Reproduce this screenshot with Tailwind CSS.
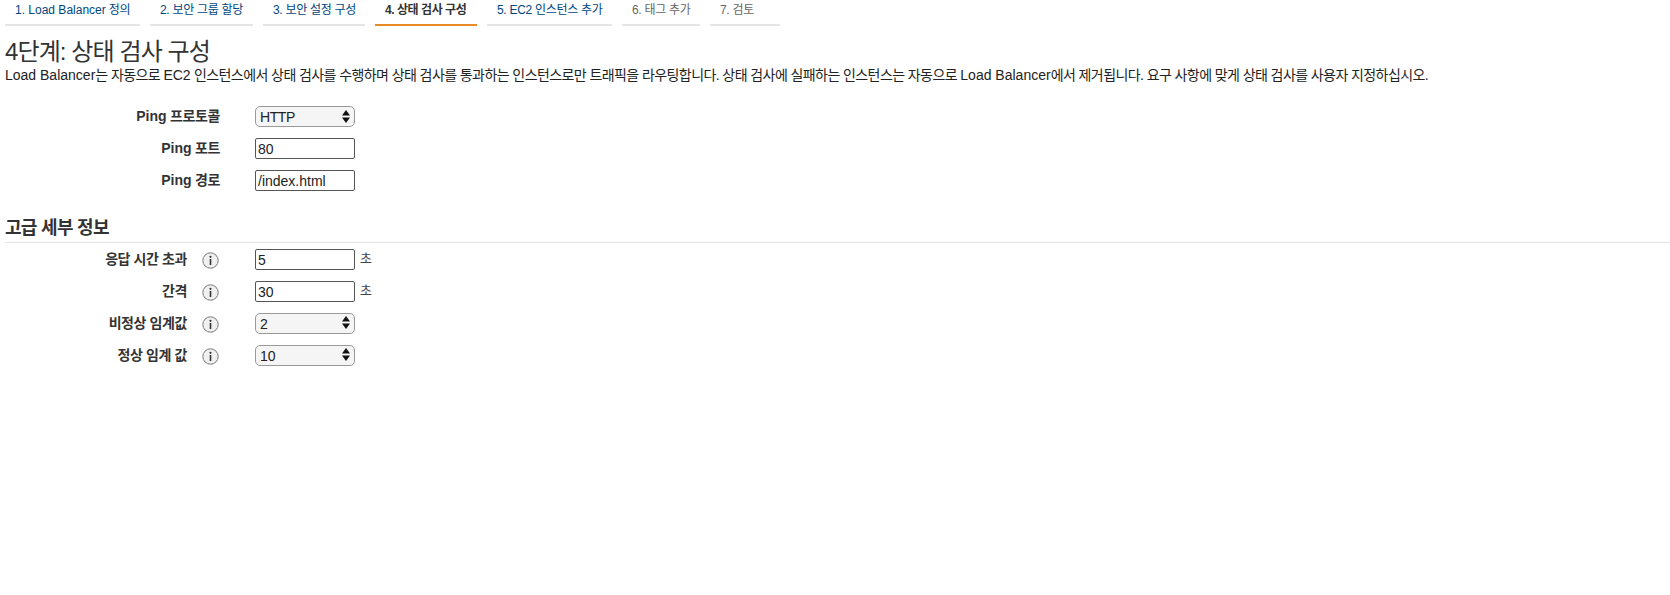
<!DOCTYPE html>
<html lang="ko">
<head>
<meta charset="utf-8">
<title>4단계: 상태 검사 구성</title>
<script src="https://cdn.jsdelivr.net/npm/@tailwindcss/browser@4"></script>
</head>
<body class="bg-white text-[#333] font-['Liberation_Sans','Noto_Sans_CJK_KR',sans-serif]">

<div class="h-[595px] w-[1670px] overflow-hidden pl-[5px]">

	<!-- wizard tabs -->
	<ul class="flex gap-[10px] h-[26px] pt-[1px] text-[12px] leading-[18px] tracking-[-0.3px]">
		<li class="w-[135px] pl-[10px] border-b-[2px] border-[#e5e5e5] text-[#00467f]"><span class="tracking-normal">1. Load Balancer</span> 정의</li>
		<li class="w-[103px] pl-[10px] border-b-[2px] border-[#e5e5e5] text-[#00467f]">2. 보안 그룹 할당</li>
		<li class="w-[102px] pl-[10px] border-b-[2px] border-[#e5e5e5] text-[#00467f]">3. 보안 설정 구성</li>
		<li class="w-[102px] pl-[10px] border-b-[2px] border-[#e88b26] font-bold tracking-[-0.45px] text-[#333]">4. 상태 검사 구성</li>
		<li class="w-[125px] pl-[10px] border-b-[2px] border-[#e5e5e5] text-[#00467f]">5. EC2 인스턴스 추가</li>
		<li class="w-[78px] pl-[10px] border-b-[2px] border-[#e5e5e5] text-[#666]">6. 태그 추가</li>
		<li class="w-[70px] pl-[10px] border-b-[2px] border-[#e5e5e5] text-[#666]">7. 검토</li>
	</ul>

	<h1 class="mt-[12px] text-[24px] leading-[28px] font-normal tracking-[-0.9px]">4단계: 상태 검사 구성</h1>
	<p class="-mt-[1px] text-[14px] leading-[20px] text-[#222] tracking-[-0.58px]"><span class="tracking-normal">Load Balancer</span>는 자동으로 <span class="tracking-normal">EC2</span> 인스턴스에서 상태 검사를 수행하며 상태 검사를 통과하는 인스턴스로만 트래픽을 라우팅합니다. 상태 검사에 실패하는 인스턴스는 자동으로 <span class="tracking-normal">Load Balancer</span>에서 제거됩니다. 요구 사항에 맞게 상태 검사를 사용자 지정하십시오.</p>

	<!-- ping settings -->
	<div class="mt-[21px] flex flex-col gap-[11px] text-[14px] tracking-[-0.4px]">
		<div class="flex items-center h-[21px]">
			<label class="w-[215px] text-right font-bold"><span class="tracking-normal">Ping</span> 프로토콜</label>
			<div class="relative ml-[35px] w-[100px] h-[21px]">
				<select class="appearance-none w-full h-full pl-[4px] rounded-[5px] border border-[#999] bg-[#f5f5f5] text-[14px] text-[#222]"><option>HTTP</option></select>
				<svg class="absolute right-[5px] top-[4px]" width="8" height="13" viewBox="0 0 8 13"><path d="M4 0 8 5.5H0zM4 13 0 7.500h8z" fill="#111"/></svg>
			</div>
		</div>
		<div class="flex items-center h-[21px]">
			<label class="w-[215px] text-right font-bold"><span class="tracking-normal">Ping</span> 포트</label>
			<input class="ml-[35px] w-[100px] h-[21px] pl-[2px] pt-[1px] rounded-[2px] border border-[#555] text-[14px] tracking-normal text-[#222]" value="80">
		</div>
		<div class="flex items-center h-[21px]">
			<label class="w-[215px] text-right font-bold"><span class="tracking-normal">Ping</span> 경로</label>
			<input class="ml-[35px] w-[100px] h-[21px] pl-[2px] pt-[1px] rounded-[2px] border border-[#555] text-[14px] tracking-normal text-[#222]" value="/index.html">
		</div>
	</div>

	<!-- advanced -->
	<h2 class="mt-[26px] pb-[3px] border-b border-[#e3e3e3] text-[18px] leading-[22px] font-bold tracking-[-0.7px]">고급 세부 정보</h2>

	<div class="mt-[6px] flex flex-col gap-[11px] text-[14px] tracking-[-0.4px]">
		<div class="flex items-center h-[21px]">
			<label class="w-[182px] text-right font-bold">응답 시간 초과</label>
			<svg class="ml-[15px] mt-[2px]" width="17" height="17" viewBox="0 0 17 17"><circle cx="8.5" cy="8.5" r="7.7" fill="#f0f0f0" stroke="#777"/><circle cx="8.5" cy="4.8" r="1.1" fill="#333"/><path d="M8.5 7v6" stroke="#333" stroke-width="1.6"/></svg>
			<input class="ml-[36px] w-[100px] h-[21px] pl-[2px] pt-[1px] rounded-[2px] border border-[#555] text-[14px] tracking-normal text-[#222]" value="5">
			<span class="ml-[5px] text-[13px] text-[#444] -mt-[2px]">초</span>
		</div>
		<div class="flex items-center h-[21px]">
			<label class="w-[182px] text-right font-bold">간격</label>
			<svg class="ml-[15px] mt-[2px]" width="17" height="17" viewBox="0 0 17 17"><circle cx="8.5" cy="8.5" r="7.7" fill="#f0f0f0" stroke="#777"/><circle cx="8.5" cy="4.8" r="1.1" fill="#333"/><path d="M8.5 7v6" stroke="#333" stroke-width="1.6"/></svg>
			<input class="ml-[36px] w-[100px] h-[21px] pl-[2px] pt-[1px] rounded-[2px] border border-[#555] text-[14px] tracking-normal text-[#222]" value="30">
			<span class="ml-[5px] text-[13px] text-[#444] -mt-[2px]">초</span>
		</div>
		<div class="flex items-center h-[21px]">
			<label class="w-[182px] text-right font-bold">비정상 임계값</label>
			<svg class="ml-[15px] mt-[2px]" width="17" height="17" viewBox="0 0 17 17"><circle cx="8.5" cy="8.5" r="7.7" fill="#f0f0f0" stroke="#777"/><circle cx="8.5" cy="4.8" r="1.1" fill="#333"/><path d="M8.5 7v6" stroke="#333" stroke-width="1.6"/></svg>
			<div class="relative ml-[36px] w-[100px] h-[21px]">
				<select class="appearance-none w-full h-full pl-[4px] rounded-[5px] border border-[#999] bg-[#f5f5f5] text-[14px] tracking-normal text-[#222]"><option>2</option></select>
				<svg class="absolute right-[5px] top-[3px]" width="8" height="13" viewBox="0 0 8 13"><path d="M4 0 8 5.5H0zM4 13 0 7.500h8z" fill="#111"/></svg>
			</div>
		</div>
		<div class="flex items-center h-[21px]">
			<label class="w-[182px] text-right font-bold">정상 임계 값</label>
			<svg class="ml-[15px] mt-[2px]" width="17" height="17" viewBox="0 0 17 17"><circle cx="8.5" cy="8.5" r="7.7" fill="#f0f0f0" stroke="#777"/><circle cx="8.5" cy="4.8" r="1.1" fill="#333"/><path d="M8.5 7v6" stroke="#333" stroke-width="1.6"/></svg>
			<div class="relative ml-[36px] w-[100px] h-[21px]">
				<select class="appearance-none w-full h-full pl-[4px] rounded-[5px] border border-[#999] bg-[#f5f5f5] text-[14px] tracking-normal text-[#222]"><option>10</option></select>
				<svg class="absolute right-[5px] top-[3px]" width="8" height="13" viewBox="0 0 8 13"><path d="M4 0 8 5.5H0zM4 13 0 7.500h8z" fill="#111"/></svg>
			</div>
		</div>
	</div>

</div>

</body>
</html>
